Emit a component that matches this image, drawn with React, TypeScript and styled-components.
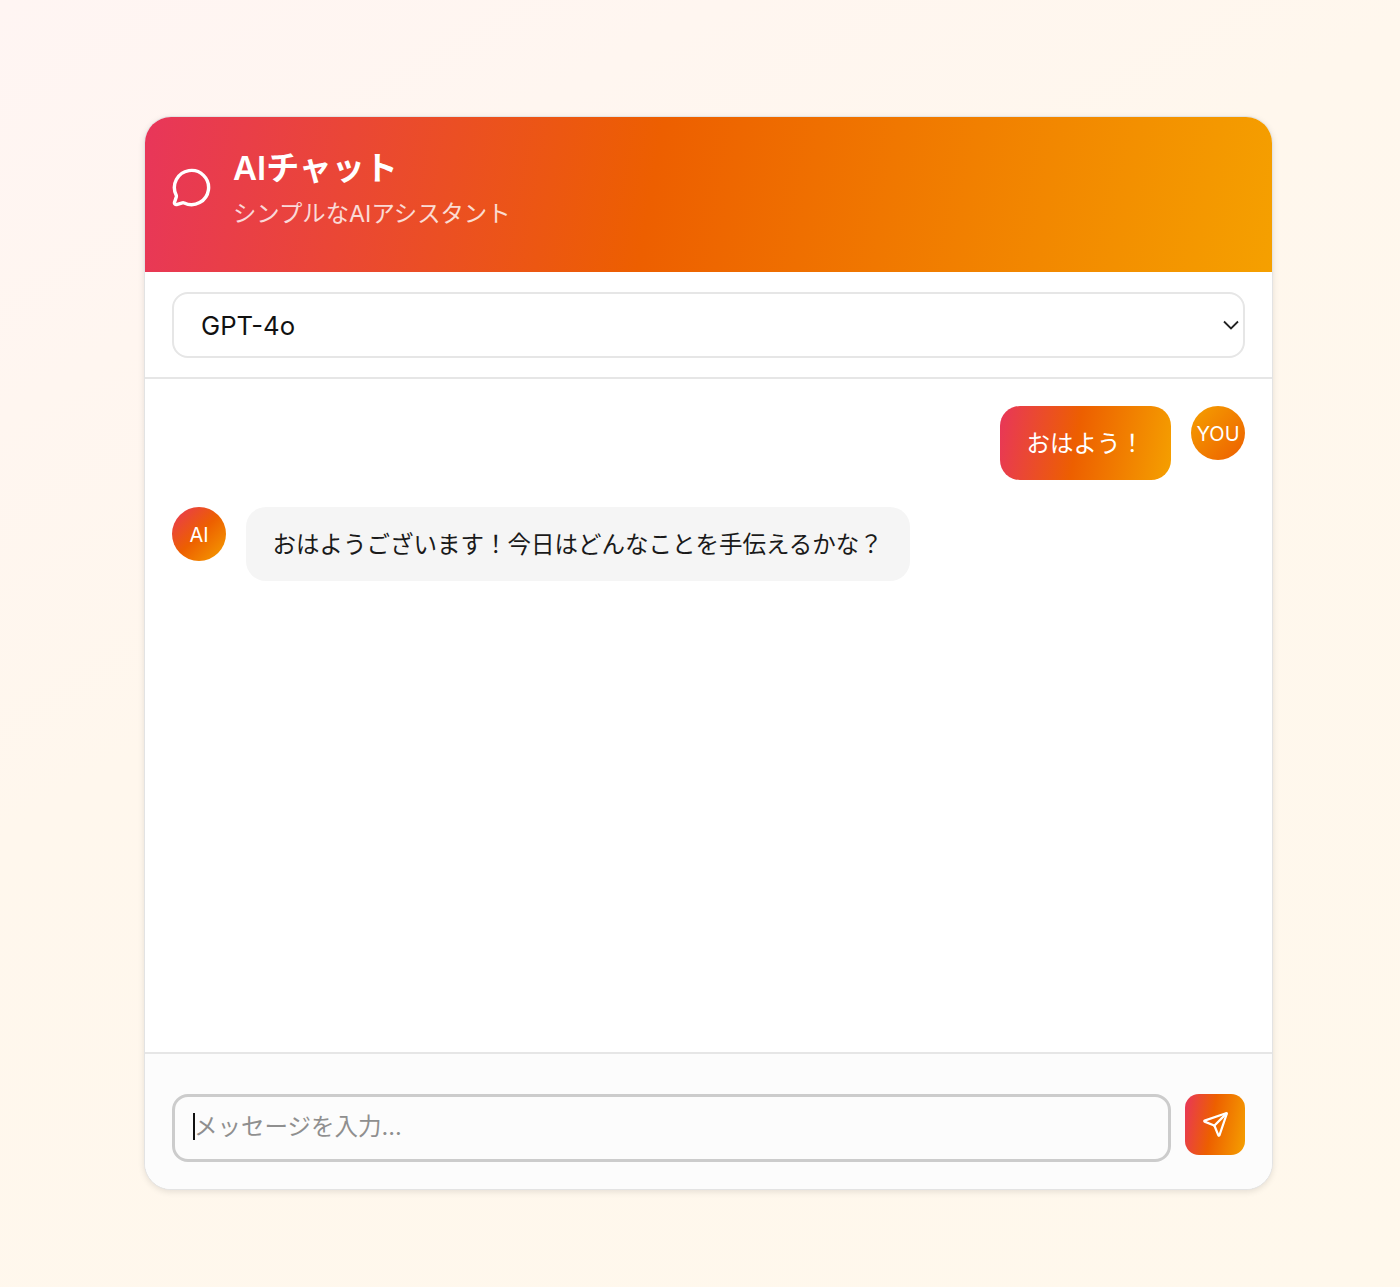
import React from 'react'
import styled, { createGlobalStyle } from 'styled-components'
import { MessageCircle, Send } from 'lucide-react'

const brandGradient = 'linear-gradient(100deg, #e8365a 0%, #ed5f00 45%, #f5a000 100%)'
const avatarGradient = 'linear-gradient(135deg, #e8365a 0%, #ed5f00 50%, #f5a000 100%)'

const GlobalStyle = createGlobalStyle`
  html, body {
    margin: 0;
    padding: 0;
  }
  * {
    box-sizing: border-box;
  }
  body {
    font-family: Inter, "Noto Sans CJK JP", sans-serif;
  }
`

const Page = styled.div`
  height: 1287px;
  padding: 116px 127px 0 144px;
  background: linear-gradient(150deg, #fff5f3 0%, #fff7ed 40%, #fff8ec 100%);
  overflow: hidden;
`

const Card = styled.main`
  width: 1129px;
  height: 1074px;
  display: flex;
  flex-direction: column;
  background: #fff;
  border: 1px solid #e3e3e3;
  border-radius: 27px;
  overflow: hidden;
  box-shadow: 0 2px 6px rgba(0, 0, 0, 0.1);
`

const Header = styled.header`
  height: 155px;
  flex-shrink: 0;
  display: flex;
  align-items: center;
  gap: 21px;
  padding: 0 27px 14px 26px;
  background: ${brandGradient};
  color: #fff;
`

const HeaderText = styled.div`
  display: flex;
  flex-direction: column;
  gap: 8px;
`

const Title = styled.h1`
  margin: 0;
  font-size: 33px;
  line-height: 44px;
  font-weight: 600;
`

const Subtitle = styled.p`
  margin: 0;
  font-size: 23.35px;
  line-height: 32px;
  font-weight: 400;
  opacity: 0.8;
`

const ModelBar = styled.div`
  height: 107px;
  flex-shrink: 0;
  padding: 20px 27px;
  border-bottom: 2px solid #e6e6e6;
`

const SelectWrap = styled.div`
  position: relative;
  height: 66px;
`

const ModelSelect = styled.select`
  width: 100%;
  height: 100%;
  padding: 0 27px;
  appearance: none;
  background: #fff;
  border: 2px solid #e6e6e6;
  border-radius: 16px;
  font-family: inherit;
  font-size: 25.7px;
  color: #111;
`

const Chevron = styled.svg`
  position: absolute;
  top: 28px;
  right: 6px;
  pointer-events: none;
`

const Messages = styled.section`
  flex: 1;
  display: flex;
  flex-direction: column;
  gap: 27px;
  padding: 27px;
`

const Row = styled.div<{ $mine?: boolean }>`
  display: flex;
  align-items: flex-start;
  gap: 20px;
  justify-content: ${(p) => (p.$mine ? 'flex-end' : 'flex-start')};
`

const Avatar = styled.div`
  width: 54px;
  height: 54px;
  flex-shrink: 0;
  display: flex;
  align-items: center;
  justify-content: center;
  padding-top: 2px;
  border-radius: 50%;
  background: ${avatarGradient};
  color: #fff;
  font-size: 20px;
`

const YouAvatar = styled(Avatar)`
  background: linear-gradient(135deg, #f5a000 0%, #ed5f00 100%);
`

const Bubble = styled.div<{ $mine?: boolean }>`
  height: 74px;
  display: flex;
  align-items: center;
  padding: 0 27px 3px 26.5px;
  border-radius: 20px;
  font-size: 23.5px;
  color: ${(p) => (p.$mine ? '#fff' : '#1a1a1a')};
  background: ${(p) => (p.$mine ? brandGradient : '#f5f5f5')};
`

const Footer = styled.footer`
  height: 137px;
  flex-shrink: 0;
  display: flex;
  align-items: flex-start;
  gap: 14px;
  padding: 40px 27px 0;
  background: #fcfcfc;
  border-top: 2px solid #e6e6e6;
`

const InputBox = styled.div`
  position: relative;
  flex: 1;
  height: 68px;
`

const MessageInput = styled.input`
  width: 100%;
  height: 100%;
  padding: 0 19px 4px;
  background: #fcfcfc;
  border: 3px solid #cccccc;
  border-radius: 16px;
  outline: none;
  font-family: inherit;
  font-size: 23.5px;
  color: #111;

  &::placeholder {
    color: #8f8f8f;
    opacity: 1;
  }
`

const Caret = styled.span`
  position: absolute;
  left: 21px;
  top: 19px;
  width: 2px;
  height: 27px;
  background: #111;
`

const SendButton = styled.button`
  width: 60px;
  height: 61px;
  flex-shrink: 0;
  display: flex;
  align-items: center;
  justify-content: center;
  padding: 0;
  border: none;
  border-radius: 14px;
  background: ${brandGradient};
  color: #fff;
`

export default function App() {
  return (
    <>
      <GlobalStyle />
      <Page>
        <Card>
          <Header>
            <MessageCircle size={41} strokeWidth={2} />
            <HeaderText>
              <Title>AIチャット</Title>
              <Subtitle>シンプルなAIアシスタント</Subtitle>
            </HeaderText>
          </Header>
          <ModelBar>
            <SelectWrap>
              <ModelSelect defaultValue="gpt-4o">
                <option value="gpt-4o">GPT-4o</option>
              </ModelSelect>
              <Chevron width="16" height="10" viewBox="0 0 16 10" fill="none">
                <path d="M1 1.5L8 8.5L15 1.5" stroke="#222" strokeWidth="1.8" />
              </Chevron>
            </SelectWrap>
          </ModelBar>
          <Messages>
            <Row $mine>
              <Bubble $mine>おはよう！</Bubble>
              <YouAvatar>YOU</YouAvatar>
            </Row>
            <Row>
              <Avatar>AI</Avatar>
              <Bubble>おはようございます！今日はどんなことを手伝えるかな？</Bubble>
            </Row>
          </Messages>
          <Footer>
            <InputBox>
              <MessageInput placeholder="メッセージを入力..." />
              <Caret />
            </InputBox>
            <SendButton aria-label="送信">
              <Send size={27} strokeWidth={2} />
            </SendButton>
          </Footer>
        </Card>
      </Page>
    </>
  )
}
